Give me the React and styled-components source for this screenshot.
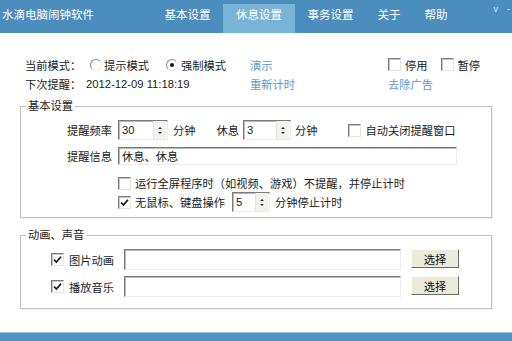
import React from 'react';
import styled, { createGlobalStyle } from 'styled-components';

const GlobalStyle = createGlobalStyle`
  html, body {
    margin: 0;
    padding: 0;
    background: #fff;
  }
  body {
    font-family: "Liberation Sans", "Noto Sans CJK SC", sans-serif;
    font-size: 11.25px;
    color: #1c1c1c;
  }
`;

const Page = styled.div`
  width: 512px;
  height: 341px;
  display: flex;
  flex-direction: column;
  overflow: hidden;
`;

const Header = styled.header`
  height: 33px;
  background: #4b8dbd;
  display: flex;
  color: #fff;
`;

const Title = styled.div`
  width: 151px;
  padding-left: 2px;
  line-height: 30px;
  font-size: 11.5px;
`;

const Nav = styled.nav`
  display: flex;
  gap: 1px;
`;

const NavItem = styled.div`
  margin-top: 4px;
  height: 29px;
  line-height: 22px;
  padding: 0 ${p => p.$pad || 11.5}px;
  font-size: 11.5px;
  background: ${p => (p.$active ? '#79b3d6' : 'transparent')};
`;

const WinCtl = styled.div`
  margin-left: auto;
  display: flex;
  gap: 9px;
  padding: 3px 2px 0 0;
  font-size: 9px;
  line-height: 12px;
  color: #d8e8f4;
`;

const Body = styled.main`
  flex: 1;
  background: #fff;
`;

const TopArea = styled.div`
  display: grid;
  grid-template-columns: 225px 138px auto;
  grid-auto-rows: 19px;
  align-items: center;
  padding: 22px 0 0 25px;
`;

const Cell = styled.div`
  display: flex;
  align-items: center;
  white-space: nowrap;
`;

const FieldLabel = styled.span`
  width: ${p => p.$w}px;
  flex: none;
  text-align: ${p => p.$align || 'left'};
`;

const Link = styled.span`
  color: #6097c7;
`;

const RadioBox = styled.span`
  width: 10px;
  height: 10px;
  border-radius: 50%;
  border: 1px solid;
  border-color: #8a8a8a #e6e6e6 #e6e6e6 #8a8a8a;
  background: #fff;
  margin: 0 ${p => p.$gap}px 0 ${p => p.$ml}px;
  display: inline-flex;
  align-items: center;
  justify-content: center;
  flex: none;
  &::after {
    content: '';
    width: 4px;
    height: 4px;
    border-radius: 50%;
    background: ${p => (p.$on ? '#111' : 'transparent')};
  }
`;

const CheckBox = styled.span`
  width: 11px;
  height: 11px;
  border: 1px solid;
  border-color: #7c7c7c #e4e4e4 #e4e4e4 #7c7c7c;
  box-shadow: inset 1px 1px 0 #c4c4c4;
  background: #fff;
  margin: 0 ${p => p.$gap ?? 4}px 0 ${p => p.$ml || 0}px;
  display: inline-flex;
  align-items: center;
  justify-content: center;
  flex: none;
`;

const Check = ({ on, ml, gap }) => (
  <CheckBox $ml={ml} $gap={gap}>
    {on && (
      <svg width="9" height="9" viewBox="0 0 9 9">
        <path d="M1 4.5 L3.4 7 L8 1.8" fill="none" stroke="#111" strokeWidth="1.7" />
      </svg>
    )}
  </CheckBox>
);

const Group = styled.fieldset`
  margin: ${p => p.$mt}px 20px 0;
  padding: 0 0 ${p => p.$pb}px;
  border: 1px solid #c2c2c2;
  box-shadow: 1px 1px 0 #f2f2f2;
  min-width: 0;
`;

const Legend = styled.legend`
  margin-left: 5px;
  padding: 0 2px;
  line-height: 14px;
`;

const Row = styled.div`
  display: flex;
  align-items: center;
  height: ${p => p.$h}px;
  margin-top: ${p => p.$mt}px;
  padding-left: ${p => p.$pl || 0}px;
  white-space: nowrap;
`;

const Sunken = styled.div`
  box-sizing: border-box;
  width: ${p => p.$w}px;
  height: ${p => p.$h}px;
  border: 1px solid;
  border-color: #7a7a7a #ececec #ececec #7a7a7a;
  box-shadow: inset 1px 1px 0 #b8b8b8;
  background: #fff;
  display: flex;
  align-items: center;
  padding-left: 3px;
  margin: 0 ${p => p.$gap ?? 5}px 0 ${p => p.$ml || 0}px;
  flex: none;
`;

const SpinValue = styled.span`
  flex: 1;
`;

const SpinBtns = styled.span`
  width: 12px;
  height: 100%;
  display: flex;
  flex-direction: column;
  justify-content: center;
  gap: 3px;
  align-items: center;
  background: #f3f3ee;
  border-left: 1px solid #e2e2e2;
  margin-right: 1px;
`;

const Arrow = styled.span`
  width: 0;
  height: 0;
  border-left: 2px solid transparent;
  border-right: 2px solid transparent;
  ${p => (p.$up ? 'border-bottom: 2px solid #333;' : 'border-top: 2px solid #333;')}
`;

const Spin = ({ value, w, ml, gap }) => (
  <Sunken $w={w} $h={20} $ml={ml} $gap={gap}>
    <SpinValue>{value}</SpinValue>
    <SpinBtns>
      <Arrow $up />
      <Arrow />
    </SpinBtns>
  </Sunken>
);

const Button = styled.button`
  box-sizing: border-box;
  width: 48px;
  height: 19px;
  margin-left: 10px;
  align-self: flex-start;
  padding: 0;
  font: inherit;
  color: #111;
  background: #ecead9;
  border: 1px solid;
  border-color: #fafafa #6f6d62 #6f6d62 #fafafa;
`;

const BottomBar = styled.footer`
  height: 8px;
  background: #4f93c0;
  border-top: 1px solid #9cc6de;
`;

export default function App() {
  return (
    <Page>
      <GlobalStyle />
      <Header>
        <Title>水滴电脑闹钟软件</Title>
        <Nav>
          <NavItem>基本设置</NavItem>
          <NavItem $active $pad={13}>休息设置</NavItem>
          <NavItem>事务设置</NavItem>
          <NavItem>关于</NavItem>
          <NavItem>帮助</NavItem>
        </Nav>
        <WinCtl>
          <span>v</span>
          <span>-</span>
        </WinCtl>
      </Header>

      <Body>
        <TopArea>
          <Cell>
            <FieldLabel $w={61}>当前模式：</FieldLabel>
            <RadioBox $ml={4} $gap={2} />
            提示模式
            <RadioBox $on $ml={17} $gap={3} />
            强制模式
          </Cell>
          <Cell><Link>演示</Link></Cell>
          <Cell>
            <Check />停用
            <Check ml={13} />暂停
          </Cell>
          <Cell>
            <FieldLabel $w={61}>下次提醒：</FieldLabel>
            2012-12-09 11:18:19
          </Cell>
          <Cell><Link>重新计时</Link></Cell>
          <Cell><Link>去除广告</Link></Cell>
        </TopArea>

        <Group $mt={6} $pb={5}>
          <Legend>基本设置</Legend>
          <Row $h={20} $mt={7}>
            <FieldLabel $w={91} $align="right">提醒频率</FieldLabel>
            <Spin value="30" w={50} ml={6} />
            分钟
            <FieldLabel $w={21} />
            休息
            <Spin value="3" w={48} ml={4} gap={4} />
            分钟
            <Check ml={30} gap={5} />
            自动关闭提醒窗口
          </Row>
          <Row $h={18} $mt={7}>
            <FieldLabel $w={91} $align="right">提醒信息</FieldLabel>
            <Sunken $w={339} $h={18} $ml={6}>休息、休息</Sunken>
          </Row>
          <Row $h={18} $mt={9} $pl={97}>
            <Check />
            运行全屏程序时（如视频、游戏）不提醒，并停止计时
          </Row>
          <Row $h={20} $mt={0} $pl={97}>
            <Check on />
            无鼠标、键盘操作
            <Spin value="5" w={38} ml={7} />
            分钟停止计时
          </Row>
        </Group>

        <Group $mt={10} $pb={11}>
          <Legend>动画、声音</Legend>
          <Row $h={21} $mt={7} $pl={30}>
            <Check on gap={5} />
            <FieldLabel $w={55}>图片动画</FieldLabel>
            <Sunken $w={277} $h={21} $gap={0} />
            <Button>选择</Button>
          </Row>
          <Row $h={21} $mt={6} $pl={30}>
            <Check on gap={5} />
            <FieldLabel $w={55}>播放音乐</FieldLabel>
            <Sunken $w={277} $h={21} $gap={0} />
            <Button>选择</Button>
          </Row>
        </Group>
      </Body>
      <BottomBar />
    </Page>
  );
}
